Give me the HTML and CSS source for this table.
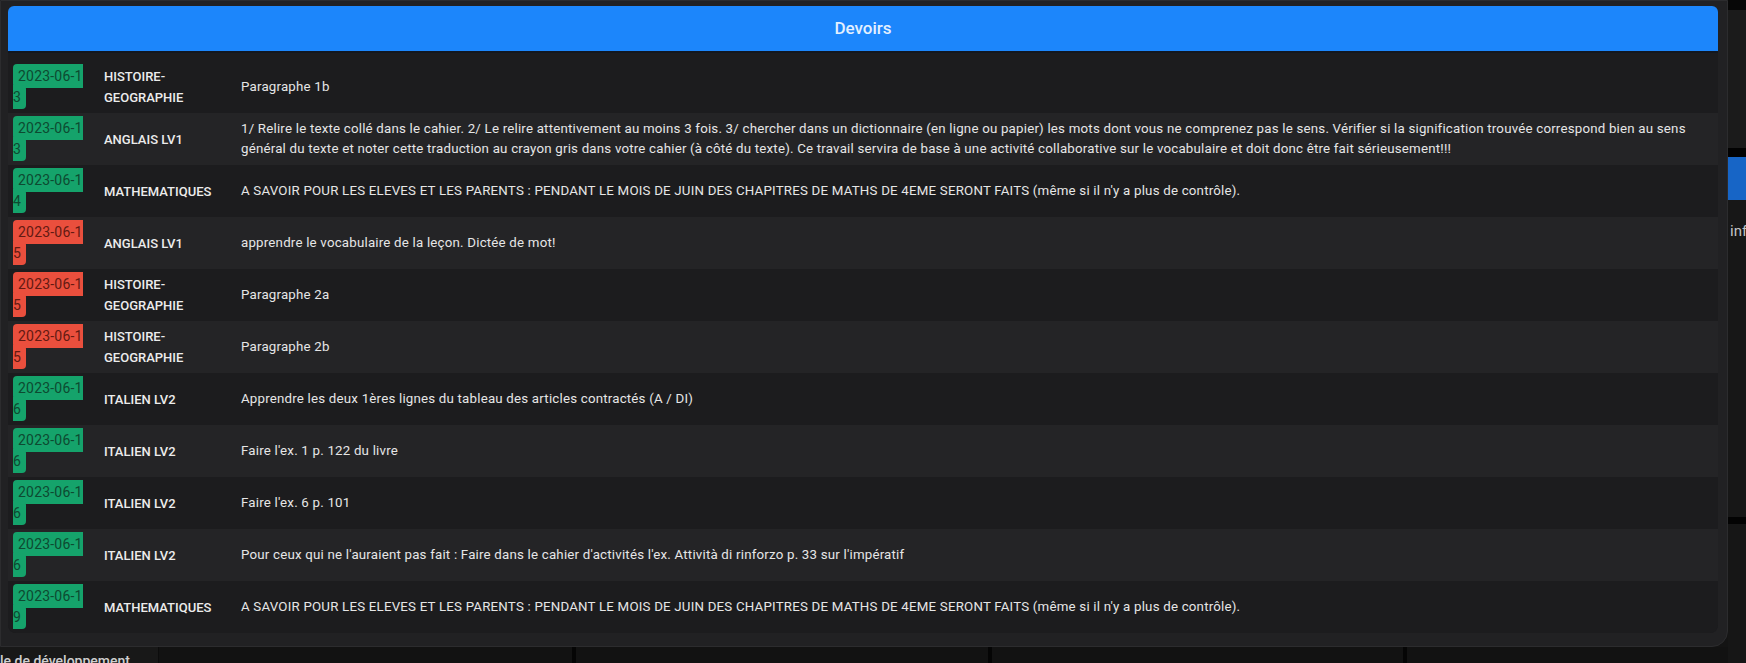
FILE: index.html
```html
<!DOCTYPE html>
<html lang="fr">
<head>
<meta charset="utf-8">
<title>Devoirs</title>
<link rel="stylesheet" href="styles.css">
</head>
<body>
<div class="page">
  <section class="dialog">
    <header class="dialog-head">Devoirs</header>
    <div class="list">
      <div class="row"><div class="c-date"><span class="badge ok">2023-06-13</span></div><div class="c-subj">HISTOIRE-GEOGRAPHIE</div><div class="c-desc">Paragraphe 1b</div></div>
      <div class="row"><div class="c-date"><span class="badge ok">2023-06-13</span></div><div class="c-subj">ANGLAIS LV1</div><div class="c-desc">1/ Relire le texte collé dans le cahier. 2/ Le relire attentivement au moins 3 fois. 3/ chercher dans un dictionnaire (en ligne ou papier) les mots dont vous ne comprenez pas le sens. Vérifier si la signification trouvée correspond bien au sens général du texte et noter cette traduction au crayon gris dans votre cahier (à côté du texte). Ce travail servira de base à une activité collaborative sur le vocabulaire et doit donc être fait sérieusement!!!</div></div>
      <div class="row"><div class="c-date"><span class="badge ok">2023-06-14</span></div><div class="c-subj">MATHEMATIQUES</div><div class="c-desc">A SAVOIR POUR LES ELEVES ET LES PARENTS : PENDANT LE MOIS DE JUIN DES CHAPITRES DE MATHS DE 4EME SERONT FAITS (même si il n'y a plus de contrôle).</div></div>
      <div class="row"><div class="c-date"><span class="badge late">2023-06-15</span></div><div class="c-subj">ANGLAIS LV1</div><div class="c-desc">apprendre le vocabulaire de la leçon. Dictée de mot!</div></div>
      <div class="row"><div class="c-date"><span class="badge late">2023-06-15</span></div><div class="c-subj">HISTOIRE-GEOGRAPHIE</div><div class="c-desc">Paragraphe 2a</div></div>
      <div class="row"><div class="c-date"><span class="badge late">2023-06-15</span></div><div class="c-subj">HISTOIRE-GEOGRAPHIE</div><div class="c-desc">Paragraphe 2b</div></div>
      <div class="row"><div class="c-date"><span class="badge ok">2023-06-16</span></div><div class="c-subj">ITALIEN LV2</div><div class="c-desc">Apprendre les deux 1ères lignes du tableau des articles contractés (A / DI)</div></div>
      <div class="row"><div class="c-date"><span class="badge ok">2023-06-16</span></div><div class="c-subj">ITALIEN LV2</div><div class="c-desc">Faire l'ex. 1 p. 122 du livre</div></div>
      <div class="row"><div class="c-date"><span class="badge ok">2023-06-16</span></div><div class="c-subj">ITALIEN LV2</div><div class="c-desc">Faire l'ex. 6 p. 101</div></div>
      <div class="row"><div class="c-date"><span class="badge ok">2023-06-16</span></div><div class="c-subj">ITALIEN LV2</div><div class="c-desc">Pour ceux qui ne l'auraient pas fait : Faire dans le cahier d'activités l'ex. Attività di rinforzo p. 33 sur l'impératif</div></div>
      <div class="row"><div class="c-date"><span class="badge ok">2023-06-19</span></div><div class="c-subj">MATHEMATIQUES</div><div class="c-desc">A SAVOIR POUR LES ELEVES ET LES PARENTS : PENDANT LE MOIS DE JUIN DES CHAPITRES DE MATHS DE 4EME SERONT FAITS (même si il n'y a plus de contrôle).</div></div>
    </div>
  </section>

  <aside class="side">
    <div class="side-top"></div>
    <div class="side-panel"></div>
    <div class="side-gap"></div>
    <div class="side-btn"></div>
    <div class="side-info">inf</div>
    <div class="side-line"></div>
    <div class="side-rest"></div>
  </aside>

  <footer class="bottom">
    <div class="b-cell b-first">le de développement</div>
    <div class="b-cell b-w1"></div>
    <div class="b-cell b-w2"></div>
    <div class="b-cell b-w3"></div>
    <div class="b-cell b-last"></div>
  </footer>
</div>
</body>
</html>
```

FILE: styles.css
```css
* { box-sizing: border-box; }

html, body {
  margin: 0;
  padding: 0;
}

body {
  width: 1746px;
  height: 663px;
  overflow: hidden;
  background: #141414;
  font-family: Roboto, "Liberation Sans", sans-serif;
  color: #e8e8e8;
}

.page {
  display: grid;
  grid-template-columns: 1728px 18px;
  grid-template-rows: 647px 16px;
  width: 1746px;
  height: 663px;
}

/* ---------- dialog ---------- */
.dialog {
  grid-column: 1;
  grid-row: 1;
  display: flex;
  flex-direction: column;
  background: #212123;
  border: 1px solid #2c2c2e;
  border-radius: 0 0 16px 0;
  padding: 5px 9px 13px 7px;
}

.dialog-head {
  height: 47px;
  flex: none;
  background: #1c86fb;
  color: #e3f0ff;
  border-radius: 6px 6px 0 0;
  border-bottom: 2px solid #121720;
  display: flex;
  align-items: center;
  justify-content: center;
  font-size: 17px;
  font-weight: 500;
  padding-bottom: 1px;
}

.list {
  flex: 1;
  background: #1c1c1e;
  padding-top: 8px;
  border-radius: 0 0 8px 8px;
  overflow: hidden;
}

.row {
  display: grid;
  grid-template-columns: 77px 156px 1fr;
  height: 52px;
  align-items: center;
  background: #1c1c1e;
}

.row:nth-child(even) {
  background: #242426;
}

.c-date {
  padding-left: 5px;
  width: 77px;
  font-size: 14px;
  line-height: 21px;
  letter-spacing: 0.2px;
  word-break: break-all;
}

.badge {
  padding: 4px 5px;
  border-radius: 4px;
}

.badge.ok {
  background: #15a36b;
  color: #0d4a31;
}

.badge.late {
  background: #ea4f3d;
  color: #631a12;
}

.c-subj {
  padding: 0 17px 0 19px;
  font-size: 13px;
  font-weight: 500;
  line-height: 21px;
  color: #ececec;
}

.c-desc {
  padding-right: 24px;
  font-size: 13.3px;
  letter-spacing: 0.2px;
  font-weight: 400;
  line-height: 20px;
  color: #e6e6e6;
}

/* ---------- page behind ---------- */
.side {
  grid-column: 2;
  grid-row: 1 / span 2;
  display: flex;
  flex-direction: column;
  overflow: hidden;
}

.side-top { height: 10px; background: #070707; }
.side-panel { height: 138px; background: #1b1b1b; }
.side-gap { height: 9px; background: #020202; }
.side-btn { height: 43px; background: #1765c6; }
.side-info {
  height: 317px;
  background: #171717;
  padding: 22px 0 0 2px;
  font-size: 15px;
  color: #c4c4c4;
  white-space: nowrap;
  overflow: hidden;
}
.side-line { height: 7px; background: #030303; }
.side-rest { flex: 1; background: #161616; }

.bottom {
  grid-column: 1;
  grid-row: 2;
  display: flex;
  overflow: hidden;
}

.b-cell {
  height: 16px;
  background: #121212;
  border-right: 4px solid #050505;
}

.b-first {
  width: 159px;
  background: #181818;
  border-right: 1px solid #0c0c0c;
  font-size: 14px;
  font-weight: 500;
  color: #cfcfcf;
  padding-top: 6px;
  line-height: 16px;
  white-space: nowrap;
  overflow: hidden;
}

.b-w1 { width: 417px; }
.b-w2 { width: 416px; }
.b-w3 { width: 415px; }
.b-last { flex: 1; border-right: 0; }
```
